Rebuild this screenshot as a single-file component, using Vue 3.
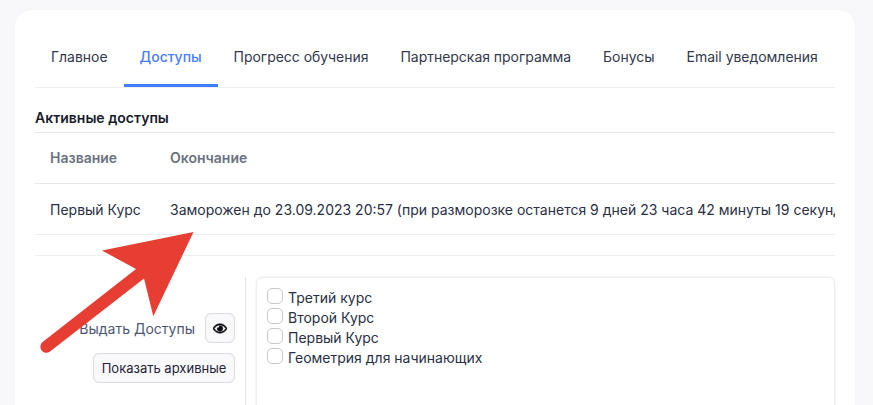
<script setup>
const tabs = [
  { label: 'Главное' },
  { label: 'Доступы', active: true },
  { label: 'Прогресс обучения' },
  { label: 'Партнерская программа' },
  { label: 'Бонусы' },
  { label: 'Email уведомления' },
]
const courses = ['Третий курс', 'Второй Курс', 'Первый Курс', 'Геометрия для начинающих']
</script>

<template>
  <div class="page">
    <div class="card">
      <nav class="tabs">
        <a v-for="t in tabs" :key="t.label" class="tab" :class="{ active: t.active }">{{ t.label }}</a>
      </nav>
      <h3 class="section-title">Активные доступы</h3>
      <div class="table">
        <div class="row head">
          <div class="c1">Название</div>
          <div class="c2">Окончание</div>
        </div>
        <div class="row">
          <div class="c1">Первый Курс</div>
          <div class="c2">Заморожен до 23.09.2023 20:57 (при разморозке останется 9 дней 23 часа 42 минуты 19 секунд)</div>
        </div>
      </div>
      <hr class="sep" />
      <div class="grant">
        <div class="side">
          <div class="side-row">
            <span class="grant-label">Выдать Доступы</span>
            <button class="btn icon-btn" aria-label="Показать">
              <svg width="14" height="13" viewBox="0 0 576 512"><path fill="#0b0b12" stroke="#0b0b12" stroke-width="26" d="M288 144a110.940 110.940 0 0 0-31.240 5 55.400 55.400 0 0 1 7.240 27 56 56 0 0 1-56 56 55.400 55.400 0 0 1-27-7.240A111.710 111.710 0 1 0 288 144zm284.520 97.400C518.290 135.590 410.930 64 288 64S57.680 135.640 3.480 241.410a32.350 32.350 0 0 0 0 29.190C57.710 376.410 165.070 448 288 448s230.320-71.640 284.520-177.410a32.350 32.350 0 0 0 0-29.190zM288 400c-98.650 0-189.090-55-237.930-144C98.910 167 189.340 112 288 112s189.090 55 237.930 144C477.100 345 386.660 400 288 400z"/></svg>
            </button>
          </div>
          <button class="btn wide">Показать архивные</button>
        </div>
        <div class="box">
          <label v-for="c in courses" :key="c" class="check">
            <span class="tick"></span>
            <span>{{ c }}</span>
          </label>
        </div>
      </div>
    </div>
    <svg class="arrow" width="873" height="405" viewBox="0 0 873 405">
      <path fill="#e63e32" d="M193.500 232 102 250.500 136 269 42.300 342.300A6 6 0 0 0 49.700 351.700L144 278.500 153.300 316.300Z"/>
    </svg>
  </div>
</template>

<style>
html, body { margin: 0; background: #f8f8fa; }
</style>

<style scoped>
.page {
  position: relative;
  height: 405px;
  overflow: hidden;
  padding: 10px 18px 0 15px;
  box-sizing: border-box;
  background: #f8f8fa;
  font-family: Inter, "Liberation Sans", sans-serif;
  font-size: 14px;
  color: #2a2f45;
}
.card {
  box-sizing: border-box;
  height: 500px;
  background: #fff;
  border-radius: 16px;
  padding: 20px;
  box-shadow: 0 0 1px rgba(0, 0, 0, 0.08);
}
.tabs {
  display: flex;
  height: 58px;
  box-sizing: border-box;
  border-bottom: 1px solid #eeeef1;
}
.tab {
  display: flex;
  align-items: center;
  height: 57px;
  box-sizing: border-box;
  padding: 0 16px 1px;
  border-bottom: 3px solid transparent;
  letter-spacing: -0.03px;
  color: #33384d;
  white-space: nowrap;
}
.tab.active {
  color: #4a7dff;
  font-weight: 500;
  border-bottom-color: #3f7fff;
}
.section-title {
  margin: 0;
  height: 45px;
  line-height: 60px;
  box-sizing: border-box;
  font-size: 14px;
  font-weight: 600;
  color: #181c2b;
  border-bottom: 1px solid #e7e7ec;
}
.table {
  overflow: hidden;
}
.row {
  display: flex;
  height: 51px;
  align-items: center;
  box-sizing: border-box;
  border-bottom: 1px solid #eeeef1;
  white-space: nowrap;
}
.row.head {
  font-weight: 600;
  color: #6b7280;
  padding-bottom: 1px;
  border-bottom-color: #e7e7ec;
}
.c1 {
  width: 135px;
  flex: none;
  padding-left: 15px;
  box-sizing: border-box;
}
.sep {
  margin: 20px 0 21px;
  border: 0;
  border-top: 1px solid #eeeef1;
}
.grant {
  display: flex;
  height: 200px;
}
.side {
  width: 211px;
  flex: none;
  box-sizing: border-box;
  padding: 36px 10px 0 0;
  border-right: 1px solid #e4e4e8;
  display: flex;
  flex-direction: column;
  align-items: flex-end;
  gap: 10px;
}
.side-row {
  display: flex;
  align-items: center;
  gap: 10px;
}
.grant-label {
  color: #4f5675;
}
.btn {
  height: 30px;
  padding: 0 8px;
  box-sizing: border-box;
  border: 1px solid #dcdce1;
  border-radius: 6px;
  background: #f9f9fb;
  font: inherit;
  font-size: 13px;
  color: #1f2336;
  white-space: nowrap;
}
.btn.wide {
  width: 142px;
  padding: 0;
}
.icon-btn {
  width: 30px;
  padding: 0;
  display: flex;
  align-items: center;
  justify-content: center;
}
.box {
  flex: 1;
  margin-left: 10px;
  padding: 10px 10px;
  box-sizing: border-box;
  border: 1px solid #eeeef1;
  border-radius: 6px;
  box-shadow: 0 0 0 0.5px #f2f2f5;
}
.check {
  display: flex;
  align-items: flex-start;
  gap: 5px;
  height: 20px;
  line-height: 20px;
}
.tick {
  width: 16px;
  height: 16px;
  border: 1px solid #c9c9cf;
  border-radius: 5px;
  background: #fff;
  flex: none;
  box-sizing: border-box;
}
.arrow {
  position: absolute;
  left: 0;
  top: 0;
  pointer-events: none;
}
</style>
